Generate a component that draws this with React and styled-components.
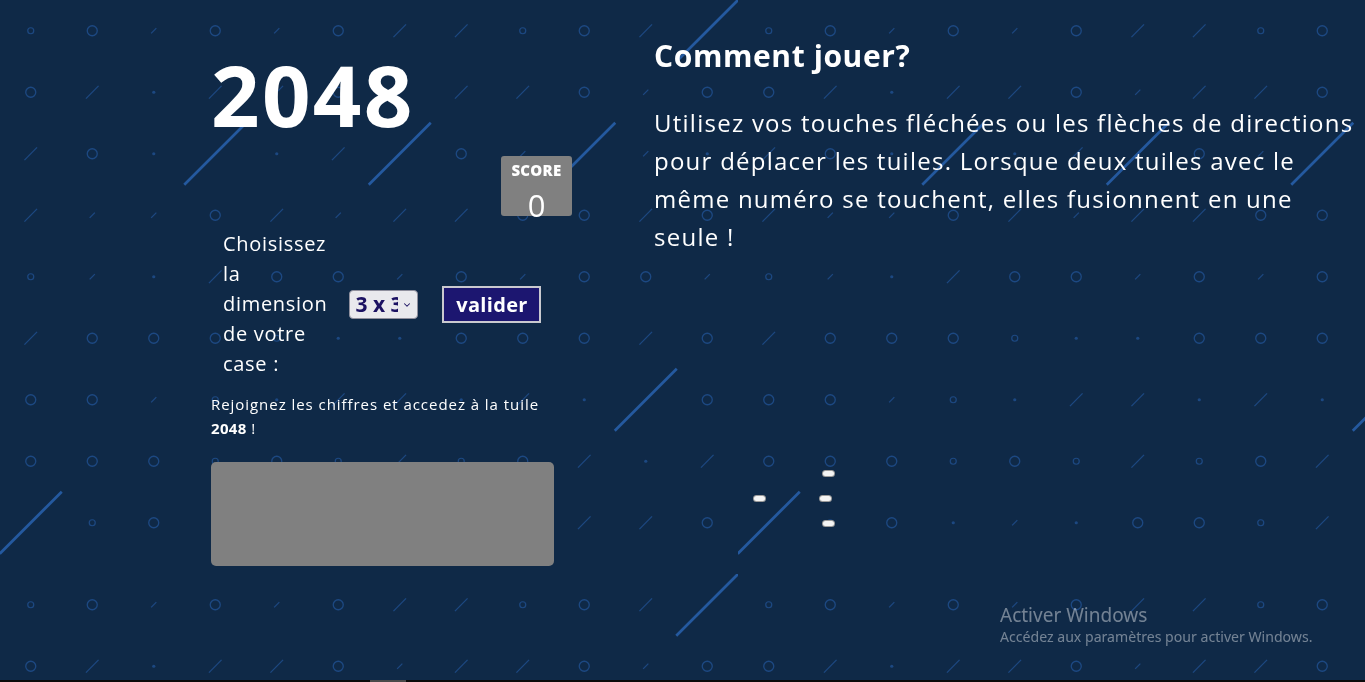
import React from 'react';
import styled, { createGlobalStyle } from 'styled-components';
import { ChevronDown } from 'lucide-react';

// background tile, 12 x 9 cells of 61.5px
// S small ring, B big ring, d dot, t tiny slash, m slash, L long streak
const TILE = [
  'SBtBtBmmSBmL',
  'BmdmmBtmmBtB',
  'mBdLdmLBtLtd',
  'mttBmtmmBBmB',
  'StdmBBtBtBBt',
  'mBBBSddBBBmB',
  'BBtSdmmdmdLB',
  'BBBSBSmSBmdm',
  'LSBdtdBBSmmB',
];
const CELL = 61.5;
const PATTERN = '#1c4882';
const STREAK = '#24599f';

function Mark({ kind, x, y }) {
  switch (kind) {
    case 'B':
      return <circle cx={x} cy={y} r='5' fill='none' stroke={PATTERN} strokeWidth='1.3' />;
    case 'S':
      return <circle cx={x} cy={y} r='3' fill='none' stroke={PATTERN} strokeWidth='1.2' />;
    case 'd':
      return <circle cx={x} cy={y} r='1.6' fill={PATTERN} />;
    case 't':
      return <line x1={x - 2.6} y1={y + 2.6} x2={x + 2.6} y2={y - 2.6} stroke={PATTERN} strokeWidth='1.2' />;
    case 'm':
      return <line x1={x - 6.3} y1={y + 6.3} x2={x + 6.3} y2={y - 6.3} stroke={PATTERN} strokeWidth='1.2' />;
    case 'L':
      return <line x1={x - 31} y1={y + 31} x2={x + 31} y2={y - 31} stroke={STREAK} strokeWidth='2.7' />;
    default:
      return null;
  }
}

function Backdrop() {
  return (
    <BackdropSvg aria-hidden='true'>
      <defs>
        <pattern id='dots' width='738' height='574' patternUnits='userSpaceOnUse'>
          {TILE.map((row, r) =>
            row.split('').map((kind, c) => (
              <Mark key={`${r}-${c}`} kind={kind} x={30.75 + c * CELL} y={30.75 + r * CELL} />
            ))
          )}
        </pattern>
      </defs>
      <rect width='100%' height='100%' fill='url(#dots)' />
    </BackdropSvg>
  );
}

const SPINNER_DASHES = [
  [1.5, 28],
  [71, 3],
  [68, 28],
  [71, 53],
];

export default function App() {
  return (
    <>
      <GlobalStyle />
      <Backdrop />
      <Page>
        <GameColumn>
          <Title>2048</Title>
          <ScoreRow>
            <ScoreBox>
              <ScoreLabel>SCORE</ScoreLabel>
              <ScoreValue>0</ScoreValue>
            </ScoreBox>
          </ScoreRow>
          <DimensionForm onSubmit={(e) => e.preventDefault()}>
            <DimensionLabel htmlFor='dimension'>Choisissez la dimension de votre case :</DimensionLabel>
            <SelectWrap>
              <DimensionSelect id='dimension' defaultValue='3'>
                <option value='3'>3 x 3</option>
                <option value='4'>4 x 4</option>
                <option value='5'>5 x 5</option>
                <option value='6'>6 x 6</option>
              </DimensionSelect>
              <SelectChevron size={10} strokeWidth={2.5} />
            </SelectWrap>
            <ValidateButton type='submit'>valider</ValidateButton>
          </DimensionForm>
          <Hint>
            Rejoignez les chiffres et accedez à la tuile <strong>2048</strong> !
          </Hint>
          <Board />
        </GameColumn>
        <RulesColumn>
          <RulesTitle>Comment jouer?</RulesTitle>
          <RulesText>
            Utilisez vos touches fléchées ou les flèches de directions pour déplacer les tuiles.
            Lorsque deux tuiles avec le même numéro se touchent, elles fusionnent en une seule !
          </RulesText>
          <Spinner aria-label='chargement'>
            {SPINNER_DASHES.map(([x, y], i) => (
              <Dash key={i} style={{ left: x, top: y }} />
            ))}
          </Spinner>
        </RulesColumn>
      </Page>
      <Watermark>
        <WatermarkTitle>Activer Windows</WatermarkTitle>
        <WatermarkText>Accédez aux paramètres pour activer Windows.</WatermarkText>
      </Watermark>
      <BottomEdge>
        <BottomThumb />
      </BottomEdge>
    </>
  );
}

// styles
const GlobalStyle = createGlobalStyle`
  html, body {
    margin: 0;
    height: 100%;
    overflow: hidden;
  }
  body {
    background: #0f2947;
    color: #fff;
    font-family: 'Open Sans', 'Noto Sans', sans-serif;
  }
`;
const BackdropSvg = styled.svg`
  position: fixed;
  top: 0;
  left: 0;
  width: 100%;
  height: 100%;
  z-index: 0;
`;
const Page = styled.main`
  position: relative;
  z-index: 1;
  display: flex;
  align-items: flex-start;
  gap: 82px;
  padding-left: 211px;
`;
const GameColumn = styled.section`
  display: flex;
  flex-direction: column;
  width: 361px;
`;
const Title = styled.h1`
  margin: 52px 0 0;
  font-size: 85px;
  line-height: 1;
  font-weight: 700;
  letter-spacing: 2.3px;
`;
const ScoreRow = styled.div`
  display: flex;
  justify-content: flex-end;
  margin-top: 19px;
`;
const ScoreBox = styled.div`
  display: flex;
  flex-direction: column;
  align-items: center;
  width: 71px;
  height: 60px;
  background: #808080;
  border-radius: 3px;
`;
const ScoreLabel = styled.span`
  margin-top: 3px;
  font-size: 15px;
  line-height: 22px;
  font-weight: 800;
  letter-spacing: 0.3px;
`;
const ScoreValue = styled.span`
  margin-top: 7px;
  font-size: 31px;
  line-height: 34px;
  font-weight: 400;
`;
const DimensionForm = styled.form`
  display: flex;
  align-items: center;
  gap: 22px;
  margin-top: 13px;
  padding-left: 12px;
`;
const DimensionLabel = styled.label`
  width: min-content;
  font-size: 20px;
  line-height: 30px;
  letter-spacing: 0.7px;
`;
const SelectWrap = styled.div`
  position: relative;
  display: flex;
`;
const DimensionSelect = styled.select`
  appearance: none;
  width: 69px;
  height: 29px;
  padding: 0 19px 0 5px;
  border: 1px solid #8f8f9d;
  border-radius: 4px;
  background: #e9e9ed;
  color: #1b1162;
  font-family: 'Open Sans', sans-serif;
  font-size: 21px;
  font-weight: 700;
  line-height: 27px;
`;
const SelectChevron = styled(ChevronDown)`
  position: absolute;
  top: 10px;
  right: 6px;
  color: #1b1162;
  pointer-events: none;
`;
const ValidateButton = styled.button`
  width: 99px;
  height: 37px;
  margin-left: 2px;
  border: 2px solid #c9c9cf;
  background: #1c1670;
  color: #fff;
  font-family: 'Open Sans', sans-serif;
  font-size: 20px;
  font-weight: 700;
  letter-spacing: 0.3px;
  cursor: pointer;
`;
const Hint = styled.p`
  margin: 13px 0 0;
  font-size: 15px;
  line-height: 24px;
  letter-spacing: 0.95px;

  strong {
    font-weight: 700;
    letter-spacing: 0.3px;
  }
`;
const Board = styled.div`
  width: 343px;
  height: 104px;
  margin-top: 22px;
  background: #808080;
  border-radius: 5px;
`;
const RulesColumn = styled.section`
  display: flex;
  flex-direction: column;
  width: 704px;
`;
const RulesTitle = styled.h2`
  margin: 36px 0 0;
  font-size: 30px;
  line-height: 40px;
  font-weight: 700;
  letter-spacing: 0.6px;
`;
const RulesText = styled.p`
  margin: 28px 0 0;
  font-size: 24px;
  line-height: 38px;
  letter-spacing: 1.25px;
`;
const Spinner = styled.div`
  position: relative;
  width: 90px;
  height: 60px;
  margin: 212px 0 0 98px;
`;
const Dash = styled.span`
  position: absolute;
  width: 11px;
  height: 5px;
  border-radius: 3px;
  background: #f4f4f4;
  box-shadow: 0 0 0 1px #9a9a9a;
`;
const Watermark = styled.div`
  position: fixed;
  left: 1000px;
  top: 603px;
  z-index: 2;
  color: rgba(255, 255, 255, 0.42);
  font-family: 'Noto Sans', 'Open Sans', sans-serif;
  pointer-events: none;
`;
const WatermarkTitle = styled.div`
  font-size: 19px;
  line-height: 24px;
`;
const WatermarkText = styled.div`
  font-size: 14.1px;
  line-height: 20px;
`;
const BottomEdge = styled.div`
  position: fixed;
  left: 0;
  right: 0;
  bottom: 0;
  height: 2px;
  z-index: 2;
  background: #0a0a0a;
`;
const BottomThumb = styled.div`
  width: 36px;
  height: 100%;
  margin-left: 370px;
  background: #4a4a4a;
`;
